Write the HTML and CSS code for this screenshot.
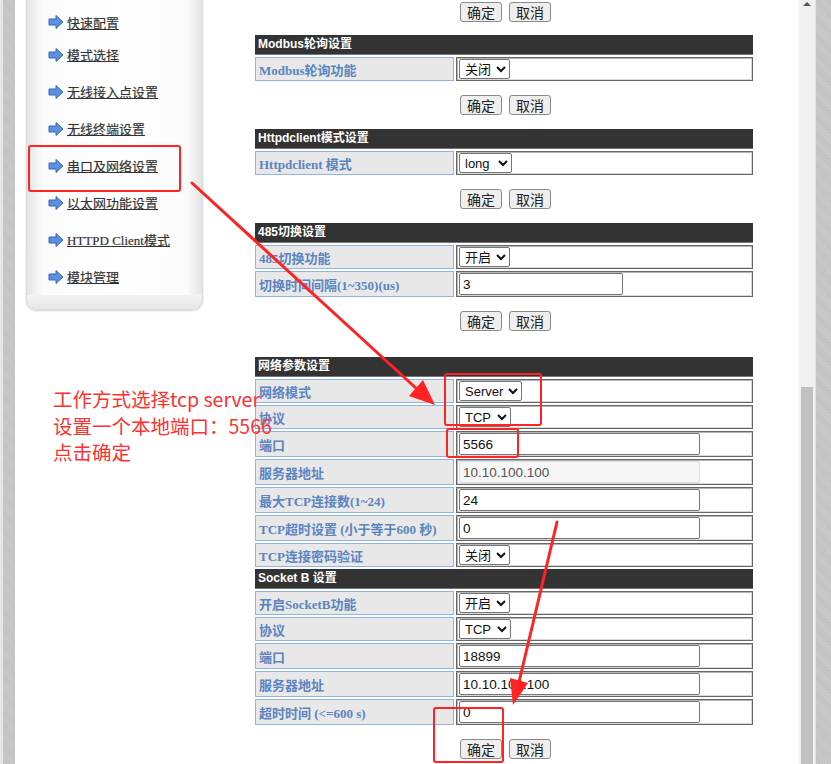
FILE: index.html
```html
<!DOCTYPE html>
<html>
  <head>
    <meta charset="UTF-8">
    <title>串口及网络设置</title>
    <link rel="stylesheet" href="styles.css">
  </head>
  <body>
    <div class="screen">
      <div class="edge"></div>

      <aside class="sidebar">
        <ul class="menu">
          <li><a href="#"><svg class="arrow" viewBox="0 0 16 14"><polygon points="1,4 8,4 8,0.5 15,7 8,13.5 8,10 1,10"/></svg>快速配置</a></li>
          <li><a href="#"><svg class="arrow" viewBox="0 0 16 14"><polygon points="1,4 8,4 8,0.5 15,7 8,13.5 8,10 1,10"/></svg>模式选择</a></li>
          <li><a href="#"><svg class="arrow" viewBox="0 0 16 14"><polygon points="1,4 8,4 8,0.5 15,7 8,13.5 8,10 1,10"/></svg>无线接入点设置</a></li>
          <li><a href="#"><svg class="arrow" viewBox="0 0 16 14"><polygon points="1,4 8,4 8,0.5 15,7 8,13.5 8,10 1,10"/></svg>无线终端设置</a></li>
          <li><a href="#"><svg class="arrow" viewBox="0 0 16 14"><polygon points="1,4 8,4 8,0.5 15,7 8,13.5 8,10 1,10"/></svg>串口及网络设置</a></li>
          <li><a href="#"><svg class="arrow" viewBox="0 0 16 14"><polygon points="1,4 8,4 8,0.5 15,7 8,13.5 8,10 1,10"/></svg>以太网功能设置</a></li>
          <li><a href="#"><svg class="arrow" viewBox="0 0 16 14"><polygon points="1,4 8,4 8,0.5 15,7 8,13.5 8,10 1,10"/></svg>HTTPD Client模式</a></li>
          <li><a href="#"><svg class="arrow" viewBox="0 0 16 14"><polygon points="1,4 8,4 8,0.5 15,7 8,13.5 8,10 1,10"/></svg>模块管理</a></li>
        </ul>
        <div class="sidebar-foot"></div>
      </aside>

      <main class="content">
        <div class="actions first">
          <button>确定</button><button>取消</button>
        </div>

        <section class="panel">
          <div class="panel-head">Modbus轮询设置</div>
          <div class="label">Modbus轮询功能</div>
          <div class="value"><select><option>关闭</option><option>开启</option></select></div>
        </section>
        <div class="actions">
          <button>确定</button><button>取消</button>
        </div>

        <section class="panel">
          <div class="panel-head">Httpdclient模式设置</div>
          <div class="label">Httpdclient 模式</div>
          <div class="value"><select><option>long</option><option>short</option></select></div>
        </section>
        <div class="actions">
          <button>确定</button><button>取消</button>
        </div>

        <section class="panel">
          <div class="panel-head">485切换设置</div>
          <div class="label">485切换功能</div>
          <div class="value"><select><option>开启</option><option>关闭</option></select></div>
          <div class="label">切换时间间隔(1~350)(us)</div>
          <div class="value"><input class="short" type="text" value="3"></div>
        </section>
        <div class="actions wide">
          <button>确定</button><button>取消</button>
        </div>

        <section class="panel">
          <div class="panel-head">网络参数设置</div>
          <div class="label">网络模式</div>
          <div class="value"><select><option>Server</option><option>Client</option></select></div>
          <div class="label">协议</div>
          <div class="value"><select><option>TCP</option><option>UDP</option></select></div>
          <div class="label">端口</div>
          <div class="value"><input type="text" value="5566"></div>
          <div class="label">服务器地址</div>
          <div class="value"><input type="text" value="10.10.100.100" disabled></div>
          <div class="label">最大TCP连接数(1~24)</div>
          <div class="value"><input type="text" value="24"></div>
          <div class="label">TCP超时设置 (小于等于600 秒)</div>
          <div class="value"><input type="text" value="0"></div>
          <div class="label">TCP连接密码验证</div>
          <div class="value"><select><option>关闭</option><option>开启</option></select></div>

          <div class="panel-head">Socket B 设置</div>
          <div class="label">开启SocketB功能</div>
          <div class="value"><select><option>开启</option><option>关闭</option></select></div>
          <div class="label">协议</div>
          <div class="value"><select><option>TCP</option><option>UDP</option></select></div>
          <div class="label">端口</div>
          <div class="value"><input type="text" value="18899"></div>
          <div class="label">服务器地址</div>
          <div class="value"><input type="text" value="10.10.100.100"></div>
          <div class="label">超时时间 (&lt;=600 s)</div>
          <div class="value"><input type="text" value="0"></div>
        </section>
        <div class="actions">
          <button>确定</button><button>取消</button>
        </div>
      </main>

      <div class="scrollbar">
        <div class="scroll-up"></div>
        <div class="thumb"></div>
      </div>
      <div class="gutter"></div>
    </div>

    <!-- annotations drawn on top of the screenshot -->
    <div class="note">
      <p>工作方式选择tcp server</p>
      <p>设置一个本地端口：5566</p>
      <p>点击确定</p>
    </div>

    <svg class="marks" width="831" height="764" viewBox="0 0 831 764">
      <g fill="none" stroke="#ff2323" stroke-width="2">
        <rect x="29" y="146" width="151" height="45" rx="2"/>
        <rect x="445" y="374" width="96" height="51" rx="2"/>
        <rect x="447" y="429" width="71" height="28" rx="2"/>
        <rect x="434" y="708" width="69" height="54" rx="2"/>
      </g>
      <g stroke="#ff2323" stroke-width="3" stroke-linecap="round">
        <line x1="192" y1="183" x2="418" y2="390"/>
        <line x1="557" y1="522" x2="519" y2="682"/>
      </g>
      <g fill="#ff2323">
        <polygon points="435,405 409,396 423,380"/>
        <polygon points="513,705 510,678 528,683"/>
      </g>
    </svg>
  </body>
</html>
```

FILE: styles.css
```css
html, body {
  margin: 0;
  padding: 0;
}

body {
  width: 831px;
  height: 764px;
  overflow: hidden;
  position: relative;
  background: #fff;
  font-family: "Liberation Serif", "Noto Sans CJK SC", serif;
}

* {
  box-sizing: border-box;
}

.screen {
  display: flex;
  align-items: flex-start;
  height: 764px;
}

.edge {
  width: 15px;
  height: 764px;
  flex: none;
  border-left: 3px solid #e6e6e6;
  background: repeating-linear-gradient(45deg, #c2c2c2 0, #c2c2c2 1px, #c9c9c9 1px, #c9c9c9 2px);
}

/* left menu */
.sidebar {
  width: 177px;
  flex: none;
  margin: -20px 0 0 11px;
  border: 1px solid #dcdcdc;
  border-top: none;
  border-radius: 0 0 10px 10px;
  background: linear-gradient(to right, #e4e4e4, #fbfbfb 9%, #fff 50%, #fbfbfb 91%, #e4e4e4);
  box-shadow: 0 1px 2px #d0d0d0;
}

.menu {
  list-style: none;
  margin: 0;
  padding: 28px 0 0 21px;
}

.menu li {
  height: 37px;
  display: flex;
  align-items: center;
}

.menu li:first-child {
  height: 28px;
}

.menu a {
  display: flex;
  align-items: center;
  color: #333;
  font-size: 13px;
  text-decoration: underline;
  text-shadow: 0 0 1px #bbb;
}

.arrow {
  width: 16px;
  height: 14px;
  margin-right: 3px;
  flex: none;
}

.arrow polygon {
  fill: #5d8fdf;
  stroke: #3568c2;
  stroke-width: 1;
  stroke-linejoin: round;
}

.sidebar-foot {
  height: 14px;
  margin-top: 0;
  border-radius: 0 0 10px 10px;
  background: linear-gradient(#f2f2f2, #e6e6e6);
}

/* settings */
.content {
  width: 498px;
  flex: none;
  margin-left: 52px;
}

.panel {
  display: grid;
  grid-template-columns: 199px 297px;
  gap: 2px;
}

.panel-head {
  grid-column: 1 / -1;
  height: 20px;
  padding-left: 3px;
  background: #333;
  border-bottom: 1px solid #777;
  color: #fff;
  font: bold 12px/19px "Liberation Sans", "Noto Sans CJK SC", sans-serif;
}

.label {
  display: flex;
  align-items: center;
  padding: 0 3px;
  background: #e8e8e8;
  border: 1px solid #8fb3e2;
  color: #5b84c0;
  font-weight: bold;
  font-size: 13px;
  white-space: nowrap;
}

.value {
  display: flex;
  align-items: center;
  padding: 1px 2px;
  border: 1px solid #666;
  box-shadow: inset 1px 1px 0 #b5b5b5, inset -1px -1px 0 #d8d8d8;
}

select {
  height: 20px;
  padding: 0 1px;
  font: 13px "Liberation Sans", "Noto Sans CJK SC", sans-serif;
  color: #111;
  background: #fff;
  border: 1px solid #767676;
  border-radius: 2px;
}

input {
  width: 241px;
  height: 22px;
  padding: 0 3px;
  font: 13.5px "Liberation Sans", "Noto Sans CJK SC", sans-serif;
  color: #111;
  border: 1px solid #767676;
  border-radius: 2px;
}

input.short {
  width: 164px;
}

input:disabled {
  background: #f6f6f6;
  border-color: #ddd;
  color: #555;
}

.actions {
  display: flex;
  gap: 7px;
  margin: 14px 0 14px 205px;
}

.actions.first {
  margin-top: 2px;
  margin-bottom: 13px;
}

.actions.wide {
  margin-bottom: 26px;
}

button {
  height: 20px;
  padding: 0 6px;
  font: 14px/16px "Noto Sans CJK SC", sans-serif;
  color: #222;
  background: #efefef;
  border: 1px solid #8a8a8a;
  border-radius: 3px;
}

/* fake browser chrome on the right */
.scrollbar {
  width: 16px;
  height: 764px;
  flex: none;
  margin-left: auto;
  background: #f0f0f0;
  position: relative;
}

.scroll-up {
  width: 0;
  height: 0;
  margin: 2px auto 0;
  border-left: 4px solid transparent;
  border-right: 4px solid transparent;
  border-bottom: 4px solid #555;
}

.thumb {
  position: absolute;
  left: 2px;
  right: 2px;
  top: 387px;
  bottom: 0;
  background: #c1c1c1;
}

.gutter {
  width: 16px;
  height: 764px;
  flex: none;
  border-left: 1px solid #e2e2e2;
  background: repeating-linear-gradient(45deg, #c2c2c2 0, #c2c2c2 1px, #cacaca 1px, #cacaca 2px);
}

/* annotations */
.note {
  position: absolute;
  left: 53px;
  top: 386px;
  color: #ff3030;
  font: 19.5px/26.5px "Noto Sans CJK SC", sans-serif;
}

.note p {
  margin: 0;
  white-space: nowrap;
}

.marks {
  position: absolute;
  left: 0;
  top: 0;
  pointer-events: none;
}
```
